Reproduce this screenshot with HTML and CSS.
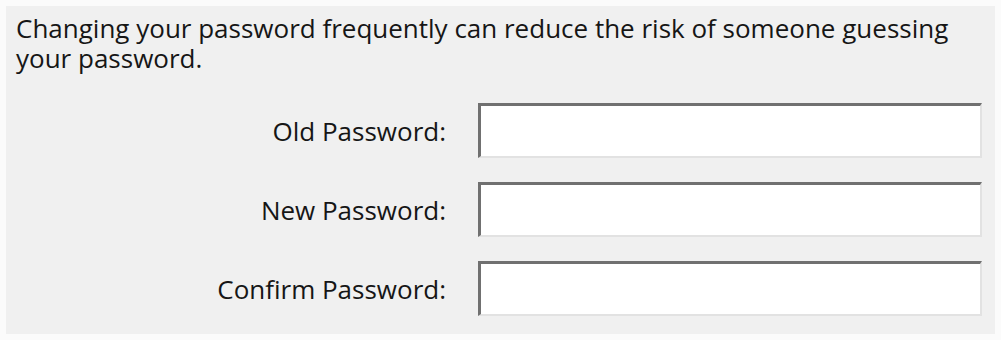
FILE: index.html
```html
<!DOCTYPE html>
<html>
<head>
<meta charset="utf-8">
<link rel="stylesheet" href="styles.css">
</head>
<body>
<div class="panel">
  <p class="desc">Changing your password frequently can reduce the risk of someone guessing your password.</p>
  <div class="form">
    <label class="lbl">Old Password:</label>
    <div class="field"></div>
    <label class="lbl">New Password:</label>
    <div class="field"></div>
    <label class="lbl">Confirm Password:</label>
    <div class="field"></div>
  </div>
</div>
</body>
</html>
```
FILE: styles.css
```css
html, body {
  margin: 0;
  padding: 0;
  background: #fbfbfb;
}
body {
  padding: 6px 6px 6px 6px;
  width: 1001px;
  height: 340px;
  box-sizing: border-box;
  font-family: "Open Sans", "DejaVu Sans", sans-serif;
  color: #161616;
}
.panel {
  background: #f0f0f0;
  height: 328px;
  box-sizing: border-box;
  padding: 7px 0 0 10px;
}
.desc {
  margin: 0;
  font-size: 26px;
  line-height: 30px;
  width: 960px;
}
.form {
  display: grid;
  grid-template-columns: 430px 504px;
  column-gap: 32px;
  row-gap: 24px;
  margin-top: 30px;
  align-items: center;
}
.lbl {
  text-align: right;
  font-size: 26px;
}
.field {
  height: 55px;
  box-sizing: border-box;
  background: #ffffff;
  border-top: 3px solid #707070;
  border-left: 3px solid #707070;
  border-right: 2px solid #e2e2e2;
  border-bottom: 2px solid #e2e2e2;
}
```
